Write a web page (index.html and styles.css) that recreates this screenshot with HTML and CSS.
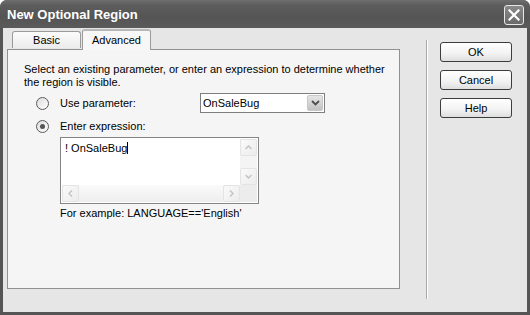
FILE: index.html
```html
<!DOCTYPE html>
<html lang="en">

<head>
    <meta charset="UTF-8">
    <title>New Optional Region</title>
    <link rel="stylesheet" href="styles.css">
</head>

<body>
    <div class="window">
        <div class="titlebar">
            <span class="title">New Optional Region</span>
            <span class="close-btn">
                <svg width="12" height="12" viewBox="0 0 12 12">
                    <path d="M1.5 1.5 L10.5 10.5 M10.5 1.5 L1.5 10.5" stroke="#fff" stroke-width="2.2" stroke-linecap="square" />
                </svg>
            </span>
        </div>

        <div class="client">
            <div class="main">
                <div class="tabs">
                    <div class="tab">Basic</div>
                    <div class="tab active">Advanced</div>
                </div>
                <div class="panel">
                    <p class="intro">Select an existing parameter, or enter an expression to determine whether<br>the region is visible.</p>

                    <div class="option">
                        <span class="radio"></span>
                        <span class="option-label">Use parameter:</span>
                        <div class="select">
                            <span class="select-value">OnSaleBug</span>
                            <span class="select-arrow">
                                <svg width="9" height="6" viewBox="0 0 9 6">
                                    <path d="M1 1 L4.5 4.5 L8 1" fill="none" stroke="#4d4d4d" stroke-width="1.8" />
                                </svg>
                            </span>
                        </div>
                    </div>

                    <div class="option">
                        <span class="radio checked"></span>
                        <span class="option-label">Enter expression:</span>
                    </div>

                    <div class="expr-box">
                        <div class="expr-top">
                            <div class="expr-text">! OnSaleBug<span class="caret"></span></div>
                            <div class="vscroll">
                                <span class="sb-btn">
                                    <svg width="7" height="5" viewBox="0 0 7 5"><path d="M0.5 4 L3.5 1 L6.5 4" fill="none" stroke="#c4c4c4" stroke-width="1.5" /></svg>
                                </span>
                                <span class="sb-btn">
                                    <svg width="7" height="5" viewBox="0 0 7 5"><path d="M0.5 1 L3.5 4 L6.5 1" fill="none" stroke="#c4c4c4" stroke-width="1.5" /></svg>
                                </span>
                            </div>
                        </div>
                        <div class="hscroll">
                            <span class="sb-btn">
                                <svg width="5" height="7" viewBox="0 0 5 7"><path d="M4 0.5 L1 3.5 L4 6.5" fill="none" stroke="#c4c4c4" stroke-width="1.5" /></svg>
                            </span>
                            <span class="sb-track"></span>
                            <span class="sb-btn">
                                <svg width="5" height="7" viewBox="0 0 5 7"><path d="M1 0.5 L4 3.5 L1 6.5" fill="none" stroke="#c4c4c4" stroke-width="1.5" /></svg>
                            </span>
                            <span class="sb-corner"></span>
                        </div>
                    </div>

                    <p class="example">For example: LANGUAGE=='English'</p>
                </div>
            </div>

            <div class="divider"></div>

            <div class="buttons">
                <button class="btn">OK</button>
                <button class="btn">Cancel</button>
                <button class="btn">Help</button>
            </div>
        </div>
    </div>
</body>

</html>
```

FILE: styles.css
```css
/* Reset */
* {
    margin: 0;
    padding: 0;
    box-sizing: border-box;
}

body {
    background: #ffffff;
    font-family: 'Liberation Sans', Arial, sans-serif;
    font-size: 11px;
    line-height: 13px;
    color: #000;
}

/* Window frame */
.window {
    width: 530px;
    height: 315px;
    background: #555555;
    border-radius: 7px 7px 0 0;
    display: flex;
    flex-direction: column;
    overflow: hidden;
}

.titlebar {
    height: 28px;
    flex-shrink: 0;
    display: flex;
    align-items: center;
    justify-content: space-between;
    padding: 0 6px 0 7px;
    background: linear-gradient(180deg, #6e6e6e 0%, #5c5c5c 20%, #555555 60%, #5a5a5a 100%);
}

.title {
    color: #fff;
    font-weight: bold;
    font-size: 13px;
    padding-top: 1px;
}

.close-btn {
    width: 20px;
    height: 20px;
    margin-top: 2px;
    border: 1px solid #e8e8e8;
    border-radius: 3px;
    background: linear-gradient(180deg, #8a8a8a, #6a6a6a);
    display: flex;
    align-items: center;
    justify-content: center;
}

/* Client area */
.client {
    flex: 1;
    margin: 0 3px 3px;
    background: #e6e6e6;
    display: flex;
}

.main {
    width: 397px;
    padding: 1px 0 0 4px;
}

/* Tabs */
.tabs {
    display: flex;
    align-items: flex-end;
    height: 20px;
    padding-left: 5px;
    position: relative;
    z-index: 1;
}

.tab {
    height: 17px;
    width: 69px;
    text-align: center;
    line-height: 16px;
    border: 1px solid #9a9a9a;
    border-bottom: none;
    border-radius: 3px 3px 0 0;
    background: linear-gradient(180deg, #fbfbfb, #ececec);
    margin-bottom: 1px;
}

.tab.active {
    height: 21px;
    width: 69px;
    margin-left: 1px;
    margin-bottom: -1px;
    background: #f7f7f7;
    border-top: 2px solid #b8b8b8;
    line-height: 18px;
}

.panel {
    height: 240px;
    background: #f5f5f5;
    border: 1px solid #919191;
    padding: 13px 4px 0 16px;
}

.intro {
    margin-bottom: 3px;
    white-space: nowrap;
}

.option {
    display: flex;
    align-items: center;
    height: 22px;
    margin-left: 12px;
}

.option + .option {
    margin-top: 1px;
}

.radio {
    width: 13px;
    height: 13px;
    border-radius: 50%;
    border: 1px solid #5a5a5a;
    background: linear-gradient(135deg, #dcdcdc, #ffffff);
    display: flex;
    align-items: center;
    justify-content: center;
}

.radio.checked::after {
    content: "";
    width: 5px;
    height: 5px;
    border-radius: 50%;
    background: #555;
}

.option-label {
    margin-left: 11px;
    width: 140px;
}

/* Dropdown */
.select {
    width: 125px;
    height: 20px;
    border: 1px solid #7f7f7f;
    background: #fff;
    display: flex;
    align-items: center;
    justify-content: space-between;
    padding: 1px;
}

.select-value {
    padding-left: 1px;
}

.select-arrow {
    width: 16px;
    height: 16px;
    border-radius: 2px;
    border: 1px solid #c8c8c8;
    background: linear-gradient(180deg, #e6e6e6, #c2c2c2);
    display: flex;
    align-items: center;
    justify-content: center;
}

/* Expression box */
.expr-box {
    width: 199px;
    height: 67px;
    margin-left: 36px;
    border: 1px solid #858585;
    background: #fff;
    display: flex;
    flex-direction: column;
    padding: 1px;
}

.expr-top {
    flex: 1;
    display: flex;
}

.expr-text {
    flex: 1;
    padding: 3px 0 0 3px;
}

.caret {
    display: inline-block;
    width: 1px;
    height: 12px;
    background: #000;
    vertical-align: -2px;
}

.vscroll {
    width: 17px;
    background: #f4f4f4;
    display: flex;
    flex-direction: column;
    justify-content: space-between;
}

.hscroll {
    height: 17px;
    display: flex;
    background: #f4f4f4;
}

.sb-btn {
    width: 17px;
    height: 17px;
    border: 1px solid #e4e4e4;
    border-radius: 2px;
    background: linear-gradient(135deg, #fafafa, #ececec);
    display: flex;
    align-items: center;
    justify-content: center;
}

.sb-track {
    flex: 1;
    background: linear-gradient(180deg, #fafafa, #eeeeee);
}

.sb-corner {
    width: 17px;
    background: #ececec;
}

.example {
    margin: 3px 0 0 36px;
}

/* Divider and buttons */
.divider {
    width: 2px;
    margin: 12px 0 13px 26px;
    border-left: 1px solid #a8a8a8;
    border-right: 1px solid #ffffff;
}

.buttons {
    display: flex;
    flex-direction: column;
    gap: 8px;
    padding: 14px 0 0 12px;
}

.btn {
    width: 72px;
    height: 20px;
    font-family: 'Liberation Sans', Arial, sans-serif;
    font-size: 11px;
    color: #000;
    border: 1px solid #3c3c3c;
    border-radius: 3px;
    background: linear-gradient(180deg, #ffffff 0%, #f2f2f2 60%, #dedede 100%);
}
```
